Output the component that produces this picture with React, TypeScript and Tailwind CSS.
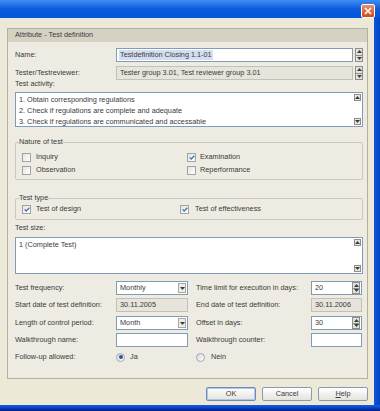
import clsx from "clsx";

function Tri({ down }: { down?: boolean }) {
  return (
    <svg width="5" height="3" viewBox="0 0 5 3">
      <path d={down ? "M0 0h5L2.5 3z" : "M0 3h5L2.5 0z"} fill="#3c3c3c" />
    </svg>
  );
}

function Spin({ inside }: { inside?: boolean }) {
  return (
    <div
      className={clsx(
        "flex w-[8px] shrink-0 flex-col border border-[#8E8D86] bg-[#E3E2DA]",
        inside ? "h-[12px]" : "h-[14px]"
      )}
    >
      <div className="flex flex-1 items-center justify-center border-b border-[#8E8D86]">
        <Tri />
      </div>
      <div className="flex flex-1 items-center justify-center">
        <Tri down />
      </div>
    </div>
  );
}

function ArrowBox({ down }: { down?: boolean }) {
  return (
    <div className="flex h-[7px] w-[7px] items-center justify-center border border-[#8E8D86] bg-[#E8E7E0]">
      <Tri down={down} />
    </div>
  );
}

function Check({ on }: { on?: boolean }) {
  return (
    <span className="flex h-[9px] w-[9px] shrink-0 items-center justify-center border border-[#A0A2A4] bg-linear-to-br from-[#E4E4DE] to-white">
      {on && (
        <svg width="6" height="5" viewBox="0 0 6 5">
          <path d="M0.6 2.4 2.2 4 5.4 0.8" stroke="#4A6FB5" strokeWidth="1.3" fill="none" />
        </svg>
      )}
    </span>
  );
}

function Radio({ on }: { on?: boolean }) {
  return (
    <span className="flex h-[9px] w-[9px] shrink-0 items-center justify-center rounded-full border border-[#9EA8B8] bg-linear-to-br from-[#DAD9D2] to-white">
      {on && <span className="h-[4px] w-[4px] rounded-full bg-[#2F5596]" />}
    </span>
  );
}

function Area({ lines, h }: { lines: string[]; h: string }) {
  return (
    <div className={clsx("flex border border-[#7F9DB9] bg-white", h)}>
      <div className="flex-1 pl-[3px] pt-[1px] leading-[11px]">
        {lines.map((l) => (
          <div key={l}>{l}</div>
        ))}
      </div>
      <div className="flex flex-col justify-between py-[1px] pr-[1px]">
        <ArrowBox />
        <ArrowBox down />
      </div>
    </div>
  );
}

function Select({ value }: { value: string }) {
  return (
    <div className="flex h-[14px] w-[72px] items-center border border-[#7F9DB9] bg-white pl-[3px] pr-[1px]">
      <span className="flex-1">{value}</span>
      <div className="flex h-[10px] w-[8px] items-center justify-center border border-[#A9A8A0] bg-[#EDECE6]">
        <Tri down />
      </div>
    </div>
  );
}

function NumBox({ value }: { value?: string }) {
  return (
    <div className="flex h-[14px] w-[51px] items-center border border-[#7F9DB9] bg-white pl-[3px] pr-[1px]">
      <span className="flex-1">{value}</span>
      {value && <Spin inside />}
    </div>
  );
}

function GreyBox({ value, w }: { value: string; w: string }) {
  return (
    <div className={clsx("flex h-[14px] items-center border border-[#C3C1B6] bg-[#E6E4DB] pl-[3px]", w)}>
      {value}
    </div>
  );
}

function Row({ left, field, right, rightField, mt }: { left: string; field: React.ReactNode; right: string; rightField: React.ReactNode; mt: string }) {
  return (
    <div className={clsx("flex h-[14px] items-center whitespace-nowrap", mt)}>
      <span className="w-[101px]">{left}</span>
      {field}
      <span className="ml-[8px] w-[115px]">{right}</span>
      {rightField}
    </div>
  );
}

function Button({ label, main }: { label: React.ReactNode; main?: boolean }) {
  return (
    <div
      className={clsx(
        "flex h-[14px] w-[50px] items-center justify-center rounded-[2px] border bg-linear-to-b from-white to-[#E4E3DC]",
        main ? "border-[#6E8BB8] shadow-[inset_0_0_0_1px_#AFC7EE]" : "border-[#8D9AAE]"
      )}
    >
      {label}
    </div>
  );
}

export default function App() {
  return (
    <div className="flex h-[411px] w-[380px] flex-col overflow-hidden bg-[#ECE9D8] font-['Liberation_Sans',Arial,sans-serif] text-[7.3px] text-[#3a3a3a]">
      <div className="flex h-[18px] shrink-0 items-start justify-end bg-linear-to-b from-[#3F8CF4] via-[#0A5CDE] to-[#0656DA] pr-[5px] pt-[4px]">
        <div className="flex h-[14px] w-[14px] items-center justify-center rounded-[2px] border border-white bg-linear-to-b from-[#EE8B62] to-[#D2461D]">
          <svg width="8" height="8" viewBox="0 0 8 8">
            <path d="M1 1l6 6M7 1L1 7" stroke="white" strokeWidth="1.6" />
          </svg>
        </div>
      </div>

      <div className="flex flex-1">
        <div className="flex flex-1 flex-col pl-[7px] pr-[6px] pt-[10px]">
          <div className="flex h-[351px] flex-col border border-[#B3B0A2] bg-[#EEECE2]">
            <div className="flex h-[13px] items-center bg-[#D6D2C3] pl-[7px]">Attribute - Test definition</div>

            <div className="flex flex-col pl-[7px] pr-[4px] pt-[6px]">
              <div className="flex h-[14px] items-center">
                <span className="w-[101px]">Name:</span>
                <div className="flex h-[14px] flex-1 items-center border border-[#7F9DB9] bg-white pl-[2px]">
                  <span className="bg-[#D4DEF0] px-[1px]">Testdefinition Closing 1.1-01</span>
                </div>
                <div className="ml-[2px]">
                  <Spin />
                </div>
              </div>
              <div className="mt-[4px] flex h-[14px] items-center">
                <span className="w-[101px]">Tester/Testreviewer:</span>
                <GreyBox value="Tester group 3.01, Test reviewer group 3.01" w="flex-1" />
                <div className="ml-[2px]">
                  <Spin />
                </div>
              </div>
              <div className="flex h-[9px] items-center">Test activity:</div>
              <div className="mt-[3px]">
                <Area
                  h="h-[35px]"
                  lines={[
                    "1. Obtain corresponding regulations",
                    "2. Check if regulations are complete and adequate",
                    "3. Check if regulations are communicated and accessable",
                  ]}
                />
              </div>

              <fieldset className="mt-[10px] rounded-[2px] border border-[#C9C7B9] p-0 pl-[3px]">
                <legend className="h-[10px] px-0 leading-[10px]">Nature of test</legend>
                <div className="flex flex-col gap-[3px] pb-[4px] pl-[3px] pt-[5px]">
                  <div className="flex h-[10px] items-center">
                    <span className="flex w-[165px] items-center gap-[5px]">
                      <Check /> Inquiry
                    </span>
                    <span className="flex items-center gap-[4px]">
                      <Check on /> Examination
                    </span>
                  </div>
                  <div className="flex h-[10px] items-center">
                    <span className="flex w-[165px] items-center gap-[5px]">
                      <Check /> Observation
                    </span>
                    <span className="flex items-center gap-[4px]">
                      <Check /> Reperformance
                    </span>
                  </div>
                </div>
              </fieldset>

              <fieldset className="mt-[13px] rounded-[2px] border border-[#C9C7B9] p-0 pl-[3px]">
                <legend className="h-[10px] px-0 leading-[10px]">Test type</legend>
                <div className="mb-[5px] mt-[1px] flex h-[10px] items-center pl-[3px]">
                  <span className="flex w-[158px] items-center gap-[5px]">
                    <Check on /> Test of design
                  </span>
                  <span className="flex items-center gap-[6px]">
                    <Check on /> Test of effectiveness
                  </span>
                </div>
              </fieldset>

              <div className="mt-[3px] flex h-[10px] items-center">Test size:</div>
              <div className="mt-[4px]">
                <Area h="h-[37px]" lines={["1 (Complete Test)"]} />
              </div>

              <Row
                mt="mt-[7px]"
                left="Test frequency:"
                field={<Select value="Monthly" />}
                right="Time limit for execution in days:"
                rightField={<NumBox value="20" />}
              />
              <Row
                mt="mt-[3px]"
                left="Start date of test definition:"
                field={<GreyBox value="30.11.2005" w="w-[72px]" />}
                right="End date of test definition:"
                rightField={<GreyBox value="30.11.2006" w="w-[51px]" />}
              />
              <Row
                mt="mt-[4px]"
                left="Length of control period:"
                field={<Select value="Month" />}
                right="Offset in days:"
                rightField={<NumBox value="30" />}
              />
              <Row
                mt="mt-[3px]"
                left="Walkthrough name:"
                field={<div className="h-[14px] w-[72px] border border-[#7F9DB9] bg-white" />}
                right="Walkthrough counter:"
                rightField={<NumBox />}
              />
              <div className="mt-[4px] flex h-[12px] items-center">
                <span className="w-[101px]">Follow-up allowed:</span>
                <span className="flex w-[80px] items-center gap-[5px]">
                  <Radio on /> Ja
                </span>
                <span className="flex items-center gap-[6px]">
                  <Radio /> Nein
                </span>
              </div>
            </div>
          </div>

          <div className="mt-[8px] flex justify-end gap-[6px]">
            <Button label="OK" main />
            <Button label="Cancel" />
            <Button
              label={
                <span>
                  <span className="underline">H</span>elp
                </span>
              }
            />
          </div>
        </div>
        <div className="w-[6px] bg-linear-to-r from-[#0B56DB] to-[#0840C2]" />
      </div>
      <div className="h-[6px] shrink-0 bg-linear-to-b from-[#1A5EDB] via-[#0842C6] to-[#001C8A]" />
    </div>
  );
}
